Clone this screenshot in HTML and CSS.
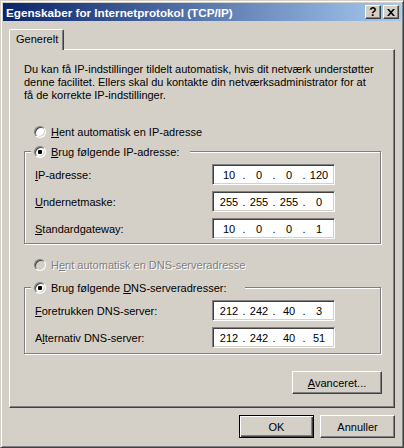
FILE: index.html
```html
<!DOCTYPE html>
<html lang="da">
<head>
<meta charset="utf-8">
<title>Egenskaber for Internetprotokol (TCP/IP)</title>
<link rel="stylesheet" href="styles.css">
</head>
<body>
<div class="window">
  <div class="titlebar">
    <span class="title">Egenskaber for Internetprotokol (TCP/IP)</span>
    <div class="caption-buttons">
      <span class="cap-btn help">?</span>
      <span class="cap-btn close"><svg width="8" height="7" viewBox="0 0 8 7"><path d="M0 0h2l2 2.2L6 0h2L5 3.5 8 7H6L4 4.8 2 7H0l3-3.5z" fill="#000"/></svg></span>
    </div>
  </div>
  <div class="client">
    <div class="tabs"><div class="tab">Generelt</div></div>
    <div class="panel">
      <p class="intro">Du kan få IP-indstillinger tildelt automatisk, hvis dit netværk understøtter<br>denne facilitet. Ellers skal du kontakte din netværksadministrator for at<br>få de korrekte IP-indstillinger.</p>
      <div class="radio-row first"><span class="radio"></span><span><u>H</u>ent automatisk en IP-adresse</span></div>
      <fieldset class="group group-ip">
        <legend class="legend legend-ip"><span class="legend-inner"><span class="radio checked"></span><span><u>B</u>rug følgende IP-adresse:</span></span></legend>
        <div class="field-row"><span class="label"><u>I</u>P-adresse:</span><div class="ipbox"><span class="oct">10</span><span class="dot">.</span><span class="oct">0</span><span class="dot">.</span><span class="oct">0</span><span class="dot">.</span><span class="oct">120</span></div></div>
        <div class="field-row"><span class="label"><u>U</u>ndernetmaske:</span><div class="ipbox"><span class="oct">255</span><span class="dot">.</span><span class="oct">255</span><span class="dot">.</span><span class="oct">255</span><span class="dot">.</span><span class="oct">0</span></div></div>
        <div class="field-row"><span class="label"><u>S</u>tandardgateway:</span><div class="ipbox"><span class="oct">10</span><span class="dot">.</span><span class="oct">0</span><span class="dot">.</span><span class="oct">0</span><span class="dot">.</span><span class="oct">1</span></div></div>
      </fieldset>
      <div class="radio-row dns-auto disabled"><span class="radio off"></span><span>H<u>e</u>nt automatisk en DNS-serveradresse</span></div>
      <fieldset class="group group-dns">
        <legend class="legend legend-dns"><span class="legend-inner"><span class="radio checked"></span><span>Brug følgende <u>D</u>NS-serveradresser:</span></span></legend>
        <div class="field-row"><span class="label"><u>F</u>oretrukken DNS-server:</span><div class="ipbox"><span class="oct">212</span><span class="dot">.</span><span class="oct">242</span><span class="dot">.</span><span class="oct">40</span><span class="dot">.</span><span class="oct">3</span></div></div>
        <div class="field-row"><span class="label">A<u>l</u>ternativ DNS-server:</span><div class="ipbox"><span class="oct">212</span><span class="dot">.</span><span class="oct">242</span><span class="dot">.</span><span class="oct">40</span><span class="dot">.</span><span class="oct">51</span></div></div>
      </fieldset>
      <div class="adv-row"><button class="btn btn-adv"><u>A</u>vanceret...</button></div>
    </div>
    <div class="dialog-buttons">
      <button class="btn default">OK</button>
      <button class="btn">Annuller</button>
    </div>
  </div>
</div>
</body>
</html>
```
FILE: styles.css
```css
* { box-sizing: border-box; }
html, body { margin: 0; padding: 0; }
body {
  width: 404px;
  height: 448px;
  overflow: hidden;
  background: #D4D0C8;
  font-family: "Liberation Sans", Arial, sans-serif;
  font-size: 11px;
  color: #000;
}
u { text-decoration: underline; text-underline-offset: 1px; }

.window {
  width: 404px;
  height: 448px;
  background: #D4D0C8;
  border: 1px solid;
  border-color: #D4D0C8 #404040 #404040 #D4D0C8;
  box-shadow: inset 1px 1px #fff, inset -1px -1px #808080;
  padding: 2px;
  display: flex;
  flex-direction: column;
}

.titlebar {
  flex: 0 0 18px;
  height: 18px;
  background: linear-gradient(to right, #0A246A, #A6CAF0);
  display: flex;
  align-items: center;
  justify-content: space-between;
  padding: 0 2px 0 2px;
}
.title {
  color: #fff;
  font-weight: bold;
  font-size: 11.7px;
  white-space: nowrap;
  padding-left: 1px;
}
.caption-buttons { display: flex; gap: 2px; }
.cap-btn {
  width: 16px;
  height: 14px;
  background: #D4D0C8;
  border: 1px solid;
  border-color: #fff #404040 #404040 #fff;
  box-shadow: inset -1px -1px #808080;
  display: flex;
  align-items: center;
  justify-content: center;
}
.help {
  font-weight: bold;
  font-size: 12px;
  line-height: 11px;
  padding-top: 1px;
}
.close svg { display: block; margin-top: 1px; }

.client {
  flex: 1;
  padding: 8px 6px 0 6px;
  display: flex;
  flex-direction: column;
}
.tabs { display: flex; position: relative; z-index: 1; }
.tab {
  width: 55px;
  height: 21px;
  margin-bottom: -1px;
  padding: 0 0 0 6px;
  line-height: 19px;
  background: #D4D0C8;
  border-left: 1px solid #fff;
  border-top: 1px solid #fff;
  border-right: 1px solid #404040;
  box-shadow: inset -1px 0 #808080;
  border-radius: 2px 2px 0 0;
  white-space: nowrap;
}
.panel {
  height: 359px;
  border: 1px solid;
  border-color: #fff #404040 #404040 #fff;
  box-shadow: inset -1px -1px #808080;
  padding: 13px 12px 0 14px;
  display: flex;
  flex-direction: column;
}
.intro {
  margin: 0;
  line-height: 13px;
  white-space: nowrap;
}

.radio-row {
  display: flex;
  align-items: center;
  gap: 5px;
  height: 13px;
  padding-left: 10px;
  white-space: nowrap;
}
.radio-row.first { margin-top: 23px; }
.radio-row.dns-auto { margin-top: 14px; }
.disabled { color: #808080; text-shadow: 1px 1px 0 #fff; }

.radio {
  flex: 0 0 12px;
  width: 12px;
  height: 12px;
  border-radius: 50%;
  border: 1px solid;
  border-color: #808080 #fff #fff #808080;
  box-shadow: inset 1px 1px #404040, inset -1px -1px #D4D0C8;
  background: #fff;
}
.radio.checked { background: radial-gradient(circle at center, #000 0 2px, #fff 2.4px); }
.radio.off { background: #D4D0C8; }

.group {
  margin: 7px 1px 0 0;
  padding: 6px 0 4px 10px;
  border: 1px solid #808080;
  box-shadow: inset 1px 1px #fff, 1px 1px #fff;
  min-width: 0;
}
.group-dns { margin-top: 10px; padding-bottom: 5px; }
.legend {
  margin-left: -4px;
  padding: 0 0 0 3px;
  height: 13px;
  background: #D4D0C8;
}
.legend-ip { width: 159px; }
.legend-dns { width: 214px; }
.legend-inner {
  display: flex;
  align-items: center;
  gap: 5px;
  height: 13px;
  white-space: nowrap;
}

.field-row {
  display: grid;
  grid-template-columns: 177px 123px;
  align-items: center;
  height: 21px;
}
.field-row + .field-row { margin-top: 6px; }
.label { white-space: nowrap; }
.ipbox {
  height: 21px;
  border: 1px solid;
  border-color: #808080 #fff #fff #808080;
  box-shadow: inset 1px 1px #404040, inset -1px -1px #D4D0C8;
  background: #fff;
  display: flex;
  align-items: center;
  padding-left: 3px;
}
.oct { width: 26px; text-align: center; }
.dot { width: 4px; text-align: center; }

.adv-row {
  display: flex;
  justify-content: flex-end;
  margin-top: 17px;
}
.btn {
  width: 75px;
  height: 23px;
  padding: 0;
  font: inherit;
  color: #000;
  background: #D4D0C8;
  border: 1px solid;
  border-color: #fff #404040 #404040 #fff;
  box-shadow: inset -1px -1px #808080;
  border-radius: 0;
}
.btn-adv { width: 90px; }
.btn.default {
  border-color: #000;
  box-shadow: inset 1px 1px #fff, inset -1px -1px #404040, inset -2px -2px #808080;
}
.dialog-buttons {
  display: flex;
  justify-content: flex-end;
  gap: 6px;
  margin-top: 7px;
}
```
